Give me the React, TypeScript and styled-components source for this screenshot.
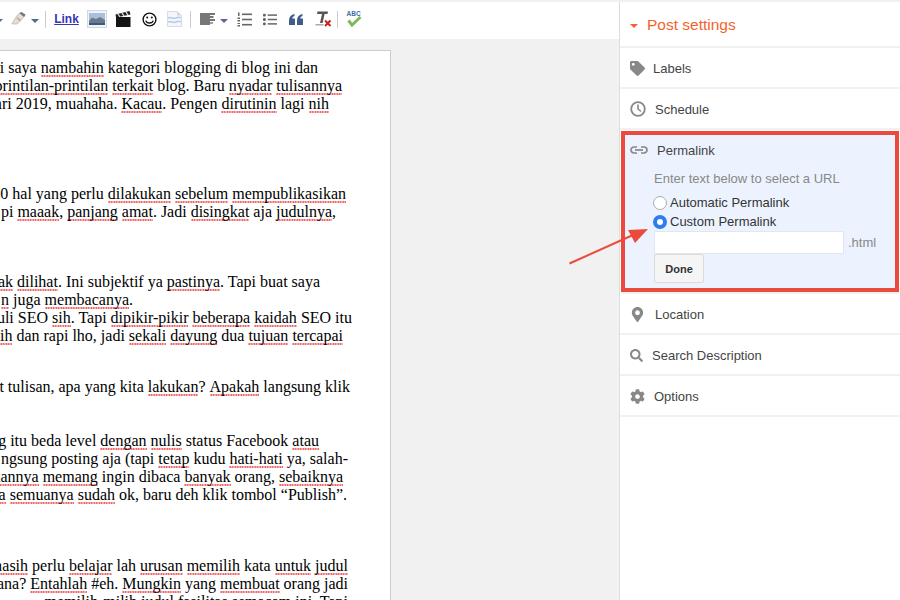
import React from "react";
import styled, { createGlobalStyle } from "styled-components";
import { FaCog, FaMapMarkerAlt, FaSearch, FaTag } from "react-icons/fa";

const GlobalStyle = createGlobalStyle`
  html, body {
    margin: 0;
    height: 100%;
    overflow: hidden;
    background: #f1f1f1;
  }
`;

const Shell = styled.div`
  position: relative;
  display: flex;
  height: 600px;
  padding-top: 2px;
  box-sizing: border-box;
  overflow: hidden;
  background: #f1f1f1;
  font-family: "Liberation Sans", Arial, sans-serif;
`;

const Main = styled.div`
  flex: 0 0 619px;
  display: flex;
  flex-direction: column;
  min-width: 0;
`;

const Toolbar = styled.div`
  display: flex;
  align-items: center;
  flex: 0 0 37px;
  margin-left: -6px;
  padding-bottom: 3px;
  box-sizing: border-box;
  background: #fff;
`;

const Tool = styled.div<{ $w: number }>`
  flex: 0 0 ${(p) => p.$w}px;
  min-width: 0;
  display: flex;
  align-items: center;
  justify-content: center;
`;

const Caret = styled.span<{ $color?: string }>`
  display: block;
  flex: none;
  width: 0;
  height: 0;
  margin-top: 3px;
  border-left: 4px solid transparent;
  border-right: 4px solid transparent;
  border-top: 4px solid ${(p) => p.$color || "#55698c"};
`;

const Divider = styled.span`
  display: block;
  width: 1px;
  height: 17px;
  background: #ccc;
`;

const LinkTool = styled.span`
  font-size: 12px;
  font-weight: 700;
  color: #3535b2;
  text-decoration: underline;
`;

const ImageButton = styled.span`
  display: flex;
  align-items: center;
  justify-content: center;
  width: 20px;
  height: 18px;
  box-sizing: border-box;
  background: #f0f4fa;
  border: 1px solid #cfd9e6;
`;

const Paper = styled.div`
  width: 391px;
  flex: 1;
  margin-top: 11px;
  padding-top: 8px;
  box-sizing: border-box;
  overflow: hidden;
  background: #fff;
  border-top: 1px solid #ccc;
  border-right: 1px solid #ccc;
  font-family: "Liberation Serif", "Times New Roman", serif;
  font-size: 16px;
  color: #000;
`;

const Block = styled.div<{ $gap: number }>`
  margin-top: ${(p) => p.$gap}px;
`;

/* lines run off the left edge of the window, so they are pinned by where they end */
const Line = styled.div<{ $end: number }>`
  display: flex;
  justify-content: flex-end;
  width: ${(p) => p.$end}px;
  height: 18px;
  line-height: 18px;
  white-space: pre;
`;

const Miss = styled.span`
  background-image: radial-gradient(circle, #f04a4a 0.8px, transparent 1.1px);
  background-size: 2.5px 2px;
  background-repeat: repeat-x;
  background-position: 0 calc(100% - 0.5px);
`;

const Sidebar = styled.aside`
  flex: 1;
  display: flex;
  flex-direction: column;
  background: #fff;
  border-left: 1px solid #ddd;
`;

const SettingsHeader = styled.div`
  display: flex;
  align-items: center;
  flex: 0 0 46px;
  box-sizing: border-box;
  padding: 1px 0 0 10px;
  gap: 9px;
  border-bottom: 2px solid #f1f1f1;
  font-size: 15.5px;
  color: #f4622c;
`;

const Row = styled.div`
  display: flex;
  align-items: center;
  flex: 0 0 41px;
  box-sizing: border-box;
  padding: 1px 0 0 10px;
  border-bottom: 2px solid #f1f1f1;
  font-size: 13px;
  color: #444;
`;

const IconSlot = styled.span<{ $w: number }>`
  display: flex;
  align-items: center;
  flex: 0 0 ${(p) => p.$w}px;
  color: #888;
`;

const PermalinkBox = styled.section`
  flex: 0 0 161px;
  box-sizing: border-box;
  margin: 1px 1px 2px;
  border: 4px solid #ea4b3c;
  box-shadow: 0 2px 0 #f1f1f1;
  background: #ecf3fe;
  font-size: 13px;
`;

const BoxTitle = styled.div`
  display: flex;
  align-items: center;
  height: 30px;
  padding-left: 5px;
  color: #444;
`;

const BoxBody = styled.div`
  display: flex;
  flex-direction: column;
  align-items: flex-start;
  padding-left: 29px;
`;

const Hint = styled.div`
  margin: 5px 0 5px;
  height: 18px;
  line-height: 18px;
  color: #888;
`;

const RadioRow = styled.label`
  display: flex;
  align-items: center;
  height: 19px;
  color: #333;
`;

const Radio = styled.input`
  appearance: none;
  width: 14px;
  height: 14px;
  margin: 0 3px 0 -1px;
  box-sizing: border-box;
  border-radius: 50%;
  background: #fff;
  border: 1px solid #aaa;

  &:checked {
    border: 4.5px solid #2f7bf0;
  }
`;

const UrlRow = styled.div`
  display: flex;
  align-items: center;
  color: #888;
`;

const UrlInput = styled.input`
  width: 190px;
  height: 23px;
  margin: 0 4px 0 0;
  padding: 0;
  box-sizing: border-box;
  background: #fff;
  border: 1px solid #e2e6ee;
`;

const DoneButton = styled.button`
  width: 50px;
  height: 29px;
  padding: 0;
  box-sizing: border-box;
  background: #f5f5f5;
  border: 1px solid #dcdcdc;
  border-radius: 2px;
  font-family: inherit;
  font-size: 11px;
  font-weight: 700;
  color: #333;
`;

const Arrow = styled.svg`
  position: absolute;
  left: 565px;
  top: 225px;
`;

// [word] marks what the spell checker has underlined
const blocks: { gap: number; lines: [number, string][] }[] = [
  {
    gap: 0,
    lines: [
      [318, "i saya [nambahin] kategori blogging di blog ini dan"],
      [342, "[printilan-printilan] [terkait] blog. Baru [nyadar] [tulisannya]"],
      [329, "ari 2019, muahaha. [Kacau]. Pengen [dirutinin] lagi [nih]"],
    ],
  },
  {
    gap: 72,
    lines: [
      [346, "0 hal yang perlu [dilakukan] [sebelum] [mempublikasikan]"],
      [336, "pi [maaak], [panjang] [amat]. Jadi [disingkat] aja [judulnya],"],
    ],
  },
  {
    gap: 52,
    lines: [
      [320, "[ak] [dilihat]. Ini subjektif ya [pastinya]. Tapi buat saya"],
      [133, "[n] juga [membacanya]."],
      [352, "uli SEO [sih]. Tapi [dipikir-pikir] [beberapa] [kaidah] SEO itu"],
      [343, "[ih] dan rapi lho, jadi [sekali] [dayung] dua [tujuan] [tercapai]"],
    ],
  },
  {
    gap: 33,
    lines: [[350, "t tulisan, apa yang kita [lakukan]? [Apakah] langsung klik"]],
  },
  {
    gap: 36,
    lines: [
      [319, "g itu beda level [dengan] [nulis] status Facebook [atau]"],
      [348, "ngsung posting aja (tapi [tetap] kudu [hati-hati] ya, salah-"],
      [343, "[uannya] [memang] ingin dibaca [banyak] orang, [sebaiknya]"],
      [347, "[a] [semuanya] [sudah] ok, baru deh klik tombol “Publish”."],
    ],
  },
  {
    gap: 53,
    lines: [
      [348, "[masih] perlu [belajar] lah [urusan] [memilih] kata [untuk] [judul]"],
      [348, "ana? [Entahlah] #eh. [Mungkin] yang [membuat] orang jadi"],
      [348, "memilih-milih judul fasilitas semacam ini. Tapi"],
    ],
  },
];

function renderLine(text: string) {
  return text.split(/(\[[^\]]+\])/).map((part, i) =>
    part.startsWith("[") ? <Miss key={i}>{part.slice(1, -1)}</Miss> : <span key={i}>{part}</span>
  );
}

const PenIcon = () => (
  <svg width="15" height="14" viewBox="0 0 15 14">
    <path d="M1 11.5 6 3.5 9.5 0.5 14 3.5 9 9.5 6 12H1.5Z" fill="#e4dfd0" stroke="#aaa596" strokeWidth=".6" />
    <path d="M8.5 1.2 10.5 0 14.5 2.5 13 5Z" fill="#6f7a84" />
    <path d="M6.5 5 10 8 9 9.5 5.5 6.5Z" fill="#b7b2a4" />
  </svg>
);

const PictureIcon = () => (
  <svg width="16" height="12" viewBox="0 0 16 12">
    <rect width="16" height="12" fill="#a9c0dc" />
    <path d="M0 8 3 4.5 7 6 11 4 16 7V12H0Z" fill="#6a7a8c" />
    <path d="M0 10H16V12H0Z" fill="#3c5a7c" />
  </svg>
);

const FilmIcon = () => (
  <svg width="16" height="16" viewBox="0 0 16 16">
    <path d="M1 6H15.5V16H1Z" fill="#141414" />
    <path d="M0.5 3.5 14.5 0 15.5 3.5 1 6.5Z" fill="#222" />
    <path d="M3 3 5 6M7 2 9 5.2M11 1 13 4.2" stroke="#ddd" strokeWidth="1.3" />
  </svg>
);

const SmileIcon = () => (
  <svg width="15" height="15" viewBox="0 0 15 15" fill="none" stroke="#111">
    <circle cx="7.5" cy="7.5" r="6.4" strokeWidth="1.4" />
    <path d="M3.8 8.6C4.8 11.8 10.2 11.8 11.2 8.6" strokeWidth="1.3" />
    <circle cx="5.2" cy="5.4" r="1" fill="#111" stroke="none" />
    <circle cx="9.8" cy="5.4" r="1" fill="#111" stroke="none" />
  </svg>
);

const PageIcon = () => (
  <svg width="15" height="16" viewBox="0 0 15 16">
    <path d="M.5.5H10L14.5 4.5V15.5H.5Z" fill="#f3f6fa" stroke="#d7dde6" />
    <path d="M10 .5V4.5H14.5Z" fill="#cfd9e6" />
    <path d="M1 7C4 5.5 6 8.5 9 7S12 6 14 7M1 11C4 9.5 6 12.5 9 11S12 10 14 11" fill="none" stroke="#b8cde6" strokeWidth="1.6" />
  </svg>
);

const AlignIcon = () => (
  <svg width="15" height="12" viewBox="0 0 15 12" fill="#777">
    <rect width="10" height="12" />
    <rect x="10" width="5" height="2" />
    <rect x="10" y="3" width="3.5" height="2" />
    <rect x="10" y="6" width="5" height="2" />
    <rect x="10" y="9" width="3" height="2" opacity=".7" />
  </svg>
);

const NumberedIcon = () => (
  <svg width="15" height="15" viewBox="0 0 15 15" fill="#666">
    <rect x="5" y="1.5" width="10" height="1.6" />
    <rect x="5" y="6.7" width="10" height="1.6" />
    <rect x="5" y="11.9" width="10" height="1.6" />
    <path d="M1 0.5H2.5V4H1ZM.5 5.5H3V7H.5ZM.5 8H3V9.5H.5ZM.5 11H3V12H.5ZM.5 13H3V14.5H.5Z" />
  </svg>
);

const BulletIcon = () => (
  <svg width="15" height="13" viewBox="0 0 15 13" fill="#666">
    <rect x="5" y="1" width="10" height="1.6" />
    <rect x="5" y="5.7" width="10" height="1.6" />
    <rect x="5" y="10.4" width="10" height="1.6" />
    <rect x="0" y="0.3" width="3" height="3" rx="1" />
    <rect x="0" y="5" width="3" height="3" rx="1" />
    <rect x="0" y="9.7" width="3" height="3" rx="1" />
  </svg>
);

const QuoteIcon = () => (
  <svg width="14" height="11" viewBox="0 0 14 11" fill="#3f5c8c">
    <path d="M0 6.5C0 3 2 .8 5.5 0V2C4 2.6 3.4 3.4 3.3 4.5H6V11H0Z" />
    <path d="M8 6.5C8 3 10 .8 13.5 0V2C12 2.6 11.4 3.4 11.3 4.5H14V11H8Z" />
  </svg>
);

const ClearIcon = () => (
  <svg width="17" height="16" viewBox="0 0 17 16">
    <path d="M2.5 0.5H13L12.5 3H9.6L7.6 12H5L7 3H2Z" fill="#555" />
    <rect x="0.5" y="13" width="8" height="1.5" fill="#aaa" />
    <path d="M10 9.5 15.5 15M15.5 9.5 10 15" stroke="#c6231c" strokeWidth="2" />
  </svg>
);

const SpellIcon = () => (
  <svg width="16" height="18" viewBox="0 0 16 18">
    <text x="0.5" y="6" fontFamily="Liberation Sans" fontSize="6.5" fontWeight="700" fill="#3f6da8">ABC</text>
    <path d="M2.5 10.5 6 15 14.5 7" fill="none" stroke="#7cbb5c" strokeWidth="3" />
  </svg>
);

const ClockIcon = () => (
  <svg width="16" height="16" viewBox="0 0 16 16" fill="none" stroke="#888">
    <circle cx="8" cy="8" r="6.8" strokeWidth="1.8" />
    <path d="M8 3.5V8L11 10.5" strokeWidth="1.6" />
  </svg>
);

const ChainIcon = () => (
  <svg width="18" height="8" viewBox="0 0 18 8" fill="none" stroke="#888" strokeWidth="1.7">
    <path d="M7 1H4A3 3 0 0 0 4 7H7" />
    <path d="M11 1H14A3 3 0 0 1 14 7H11" />
    <path d="M5 4H13" />
  </svg>
);

export default function App() {
  return (
    <Shell>
      <GlobalStyle />
      <Main>
        <Toolbar>
          <Tool $w={10}><Caret /></Tool>
          <Tool $w={6} />
          <Tool $w={17}><PenIcon /></Tool>
          <Tool $w={15}><Caret /></Tool>
          <Tool $w={7}><Divider /></Tool>
          <Tool $w={35}><LinkTool>Link</LinkTool></Tool>
          <Tool $w={26}><ImageButton><PictureIcon /></ImageButton></Tool>
          <Tool $w={25}><FilmIcon /></Tool>
          <Tool $w={28}><SmileIcon /></Tool>
          <Tool $w={23}><PageIcon /></Tool>
          <Tool $w={8}><Divider /></Tool>
          <Tool $w={27}><AlignIcon /></Tool>
          <Tool $w={5}><Caret /></Tool>
          <Tool $w={37}><NumberedIcon /></Tool>
          <Tool $w={14}><BulletIcon /></Tool>
          <Tool $w={37}><QuoteIcon /></Tool>
          <Tool $w={18}><ClearIcon /></Tool>
          <Tool $w={10}><Divider /></Tool>
          <Tool $w={23}><SpellIcon /></Tool>
        </Toolbar>
        <Paper>
          {blocks.map((block, b) => (
            <Block key={b} $gap={block.gap}>
              {block.lines.map(([end, text], l) => (
                <Line key={l} $end={end}>{renderLine(text)}</Line>
              ))}
            </Block>
          ))}
        </Paper>
      </Main>
      <Sidebar>
        <SettingsHeader>
          <Caret $color="#f4622c" />
          Post settings
        </SettingsHeader>
        <Row><IconSlot $w={23}><FaTag size={15} /></IconSlot>Labels</Row>
        <Row><IconSlot $w={25}><ClockIcon /></IconSlot>Schedule</Row>
        <PermalinkBox>
          <BoxTitle><IconSlot $w={27}><ChainIcon /></IconSlot>Permalink</BoxTitle>
          <BoxBody>
            <Hint>Enter text below to select a URL</Hint>
            <RadioRow><Radio type="radio" name="permalink" />Automatic Permalink</RadioRow>
            <RadioRow><Radio type="radio" name="permalink" defaultChecked />Custom Permalink</RadioRow>
            <UrlRow><UrlInput type="text" />.html</UrlRow>
            <DoneButton type="button">Done</DoneButton>
          </BoxBody>
        </PermalinkBox>
        <Row><IconSlot $w={25}><FaMapMarkerAlt size={15} /></IconSlot>Location</Row>
        <Row><IconSlot $w={22}><FaSearch size={13} /></IconSlot>Search Description</Row>
        <Row><IconSlot $w={24}><FaCog size={15} /></IconSlot>Options</Row>
      </Sidebar>
      <Arrow width="90" height="45" viewBox="0 0 90 45">
        <path d="M4.5 38.5 68 10" stroke="#ea4b3c" strokeWidth="2" />
        <path d="M83 4 63 5 70 18Z" fill="#ea4b3c" />
      </Arrow>
    </Shell>
  );
}
